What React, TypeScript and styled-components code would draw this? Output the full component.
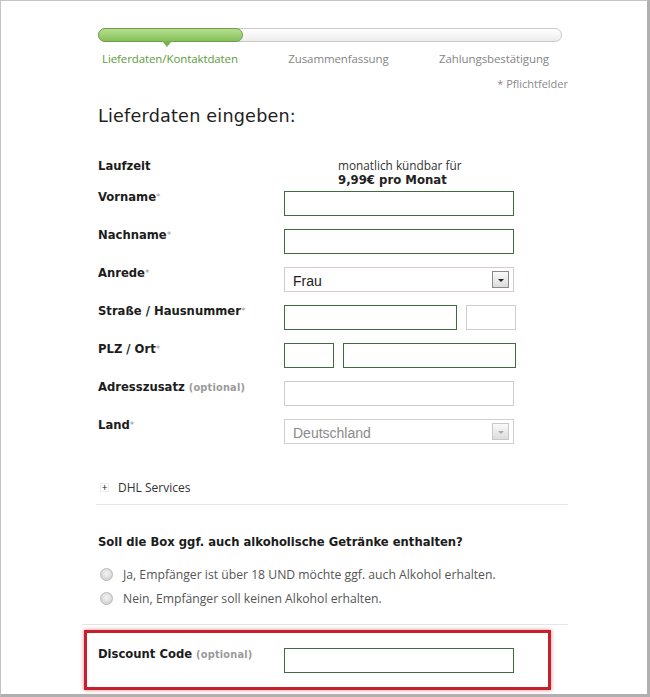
import React from "react";
import styled, { createGlobalStyle } from "styled-components";

const Global = createGlobalStyle`
  html, body { margin: 0; padding: 0; background: #fff; }
  * { box-sizing: border-box; }
`;

const Frame = styled.div`
  width: 650px;
  height: 697px;
  border: 1px solid #c4c4c4;
  border-right: 3px solid #b0b0b0;
  border-bottom: 3px solid #b0b0b0;
  overflow: hidden;
  background: #fff;
  font-family: "DejaVu Sans", Verdana, sans-serif;
  color: #222;
`;

const Page = styled.div`
  width: 474px;
  margin-left: 93px;
  padding-top: 27px;
`;

const Track = styled.div`
  position: relative;
  height: 14px;
  margin: 0 6px 0 4px;
  border: 1px solid #c8c8c8;
  border-radius: 7px;
  background: linear-gradient(#ffffff, #ececec);
`;

const Fill = styled.div`
  position: relative;
  height: 14px;
  margin: -1px 0 0 -1px;
  border: 1px solid #6f9e4c;
  border-radius: 7px;
  background: linear-gradient(#b5e08e, #86c05a);

  &:after {
    content: "";
    position: absolute;
    left: 63px;
    top: 12px;
    border-left: 5px solid transparent;
    border-right: 5px solid transparent;
    border-top: 6px solid #7ab34e;
  }
`;

const Steps = styled.div`
  display: flex;
  justify-content: space-between;
  padding: 0 19px 0 8px;
  margin-top: 9px;
  font-family: "Open Sans", sans-serif;
  font-size: 11.5px;
  letter-spacing: -0.1px;
`;

const Step = styled.span<{ $active?: boolean }>`
  color: ${(p) => (p.$active ? "#5e9b3a" : "#858585")};
`;

const Required = styled.div`
  text-align: right;
  margin-top: 10px;
  font-family: "Open Sans", sans-serif;
  font-size: 11px;
  color: #8a8a8a;
`;

const Heading = styled.h1`
  margin: 15px 0 0 4px;
  font-size: 17.6px;
  font-weight: normal;
  color: #1e1e1e;
  letter-spacing: 0.2px;
`;

const Form = styled.div`
  margin-top: 34px;
  padding-left: 4px;
`;

const Row = styled.div<{ $gap?: number }>`
  display: flex;
  align-items: flex-start;
  margin-bottom: ${(p) => p.$gap ?? 13}px;
`;

const Label = styled.div`
  width: 186px;
  flex-shrink: 0;
  font-size: 11.6px;
  font-weight: bold;
  color: #1c1c1c;
  line-height: 13px;
`;

const Star = styled.span`
  color: #999;
  font-weight: normal;
  font-size: 9px;
  vertical-align: 1px;
`;

const Optional = styled.span`
  color: #9a9a9a;
  font-size: 9.8px;
  letter-spacing: 0.2px;
`;

const Info = styled.div`
  padding-left: 54px;
  font-family: "Open Sans", sans-serif;
  font-size: 11.8px;
  color: #333;
  line-height: 14px;
  margin-top: -2px;

  b {
    font-family: "DejaVu Sans", Verdana, sans-serif;
    font-size: 11.7px;
    color: #222;
  }
`;

const Fields = styled.div`
  display: flex;
  gap: 9px;
`;

const Input = styled.div<{ $w: number; $muted?: boolean }>`
  width: ${(p) => p.$w}px;
  height: 25px;
  border: 1px solid ${(p) => (p.$muted ? "#cfcfcf" : "#3f6b3f")};
  background: #fff;
`;

const Select = styled.div<{ $muted?: boolean }>`
  display: flex;
  align-items: center;
  justify-content: space-between;
  width: 230px;
  height: 25px;
  padding: 3px 4px 0 8px;
  border: 1px solid ${(p) => (p.$muted ? "#cfcfcf" : "#d9c8cc")};
  font-family: "Liberation Sans", Arial, sans-serif;
  font-size: 14px;
  color: ${(p) => (p.$muted ? "#8a8a8a" : "#222")};
`;

const Arrow = styled.div<{ $muted?: boolean }>`
  display: flex;
  align-items: center;
  justify-content: center;
  width: 17px;
  height: 17px;
  margin-top: -3px;
  border: 1px solid ${(p) => (p.$muted ? "#c8c8c8" : "#8a8a8a")};
  background: linear-gradient(#fafafa, #dcdcdc);

  &:after {
    content: "";
    margin-top: 2px;
    border-left: 3px solid transparent;
    border-right: 3px solid transparent;
    border-top: 3px solid ${(p) => (p.$muted ? "#aaa" : "#222")};
  }
`;

const Toggle = styled.div`
  display: flex;
  align-items: center;
  gap: 9px;
  margin: 35px 0 0 6px;
  font-family: "Open Sans", sans-serif;
  font-size: 12px;
  color: #333;
`;

const PlusBox = styled.span`
  display: inline-flex;
  align-items: center;
  justify-content: center;
  width: 9px;
  height: 9px;
  font-size: 10px;
  line-height: 9px;
  color: #222;
  border: 1px solid #eee;
`;

const Divider = styled.hr<{ $left?: number; $top?: number }>`
  margin: ${(p) => p.$top ?? 8}px 0 0 ${(p) => p.$left ?? 2}px;
  border: 0;
  border-top: 1px solid #e6e6e6;
`;

const Question = styled.div`
  margin: 30px 0 0 4px;
  font-size: 11.6px;
  font-weight: bold;
  color: #1c1c1c;
`;

const Radios = styled.div`
  display: flex;
  flex-direction: column;
  gap: 7px;
  margin: 17px 0 0 6px;
`;

const RadioRow = styled.label`
  display: flex;
  align-items: center;
  gap: 10px;
  font-family: "Open Sans", sans-serif;
  font-size: 12.2px;
  color: #555;
`;

const Radio = styled.span`
  width: 13px;
  height: 13px;
  flex-shrink: 0;
  border-radius: 50%;
  border: 1px solid #b8b8b8;
  background: radial-gradient(circle at 50% 40%, #f4f4f4 0%, #d6d6d6 70%, #c4c4c4 100%);
`;

const Highlight = styled.div`
  display: flex;
  align-items: flex-start;
  width: 467px;
  height: 60px;
  margin: 5px 0 0 -10px;
  padding: 15px 0 0 11px;
  border: 3px solid #c5202b;
  box-shadow: 0 0 4px rgba(190, 30, 40, 0.55);
`;

export default function App() {
  return (
    <>
      <Global />
      <Frame>
        <Page>
          <Track>
            <Fill style={{ width: 145 }} />
          </Track>
          <Steps>
            <Step $active>Lieferdaten/Kontaktdaten</Step>
            <Step>Zusammenfassung</Step>
            <Step>Zahlungsbestätigung</Step>
          </Steps>
          <Required>* Pflichtfelder</Required>
          <Heading>Lieferdaten eingeben:</Heading>

          <Form>
            <Row $gap={4}>
              <Label>Laufzeit</Label>
              <Info>
                monatlich kündbar für
                <br />
                <b>9,99€ pro Monat</b>
              </Info>
            </Row>
            <Row>
              <Label>Vorname<Star>*</Star></Label>
              <Input $w={230} />
            </Row>
            <Row>
              <Label>Nachname<Star>*</Star></Label>
              <Input $w={230} />
            </Row>
            <Row>
              <Label>Anrede<Star>*</Star></Label>
              <Select>
                Frau
                <Arrow />
              </Select>
            </Row>
            <Row>
              <Label>Straße / Hausnummer<Star>*</Star></Label>
              <Fields>
                <Input $w={173} />
                <Input $w={50} $muted />
              </Fields>
            </Row>
            <Row>
              <Label>PLZ / Ort<Star>*</Star></Label>
              <Fields>
                <Input $w={50} />
                <Input $w={173} />
              </Fields>
            </Row>
            <Row>
              <Label>
                Adresszusatz <Optional>(optional)</Optional>
              </Label>
              <Input $w={230} $muted />
            </Row>
            <Row $gap={0}>
              <Label>Land<Star>*</Star></Label>
              <Select $muted>
                Deutschland
                <Arrow $muted />
              </Select>
            </Row>
          </Form>

          <Toggle>
            <PlusBox>+</PlusBox>
            DHL Services
          </Toggle>
          <Divider />

          <Question>Soll die Box ggf. auch alkoholische Getränke enthalten?</Question>
          <Radios>
            <RadioRow>
              <Radio />
              Ja, Empfänger ist über 18 UND möchte ggf. auch Alkohol erhalten.
            </RadioRow>
            <RadioRow>
              <Radio />
              Nein, Empfänger soll keinen Alkohol erhalten.
            </RadioRow>
          </Radios>
          <Divider $left={-12} $top={17} />

          <Highlight>
            <Label>
              Discount Code <Optional>(optional)</Optional>
            </Label>
            <Input $w={230} />
          </Highlight>
        </Page>
      </Frame>
    </>
  );
}
